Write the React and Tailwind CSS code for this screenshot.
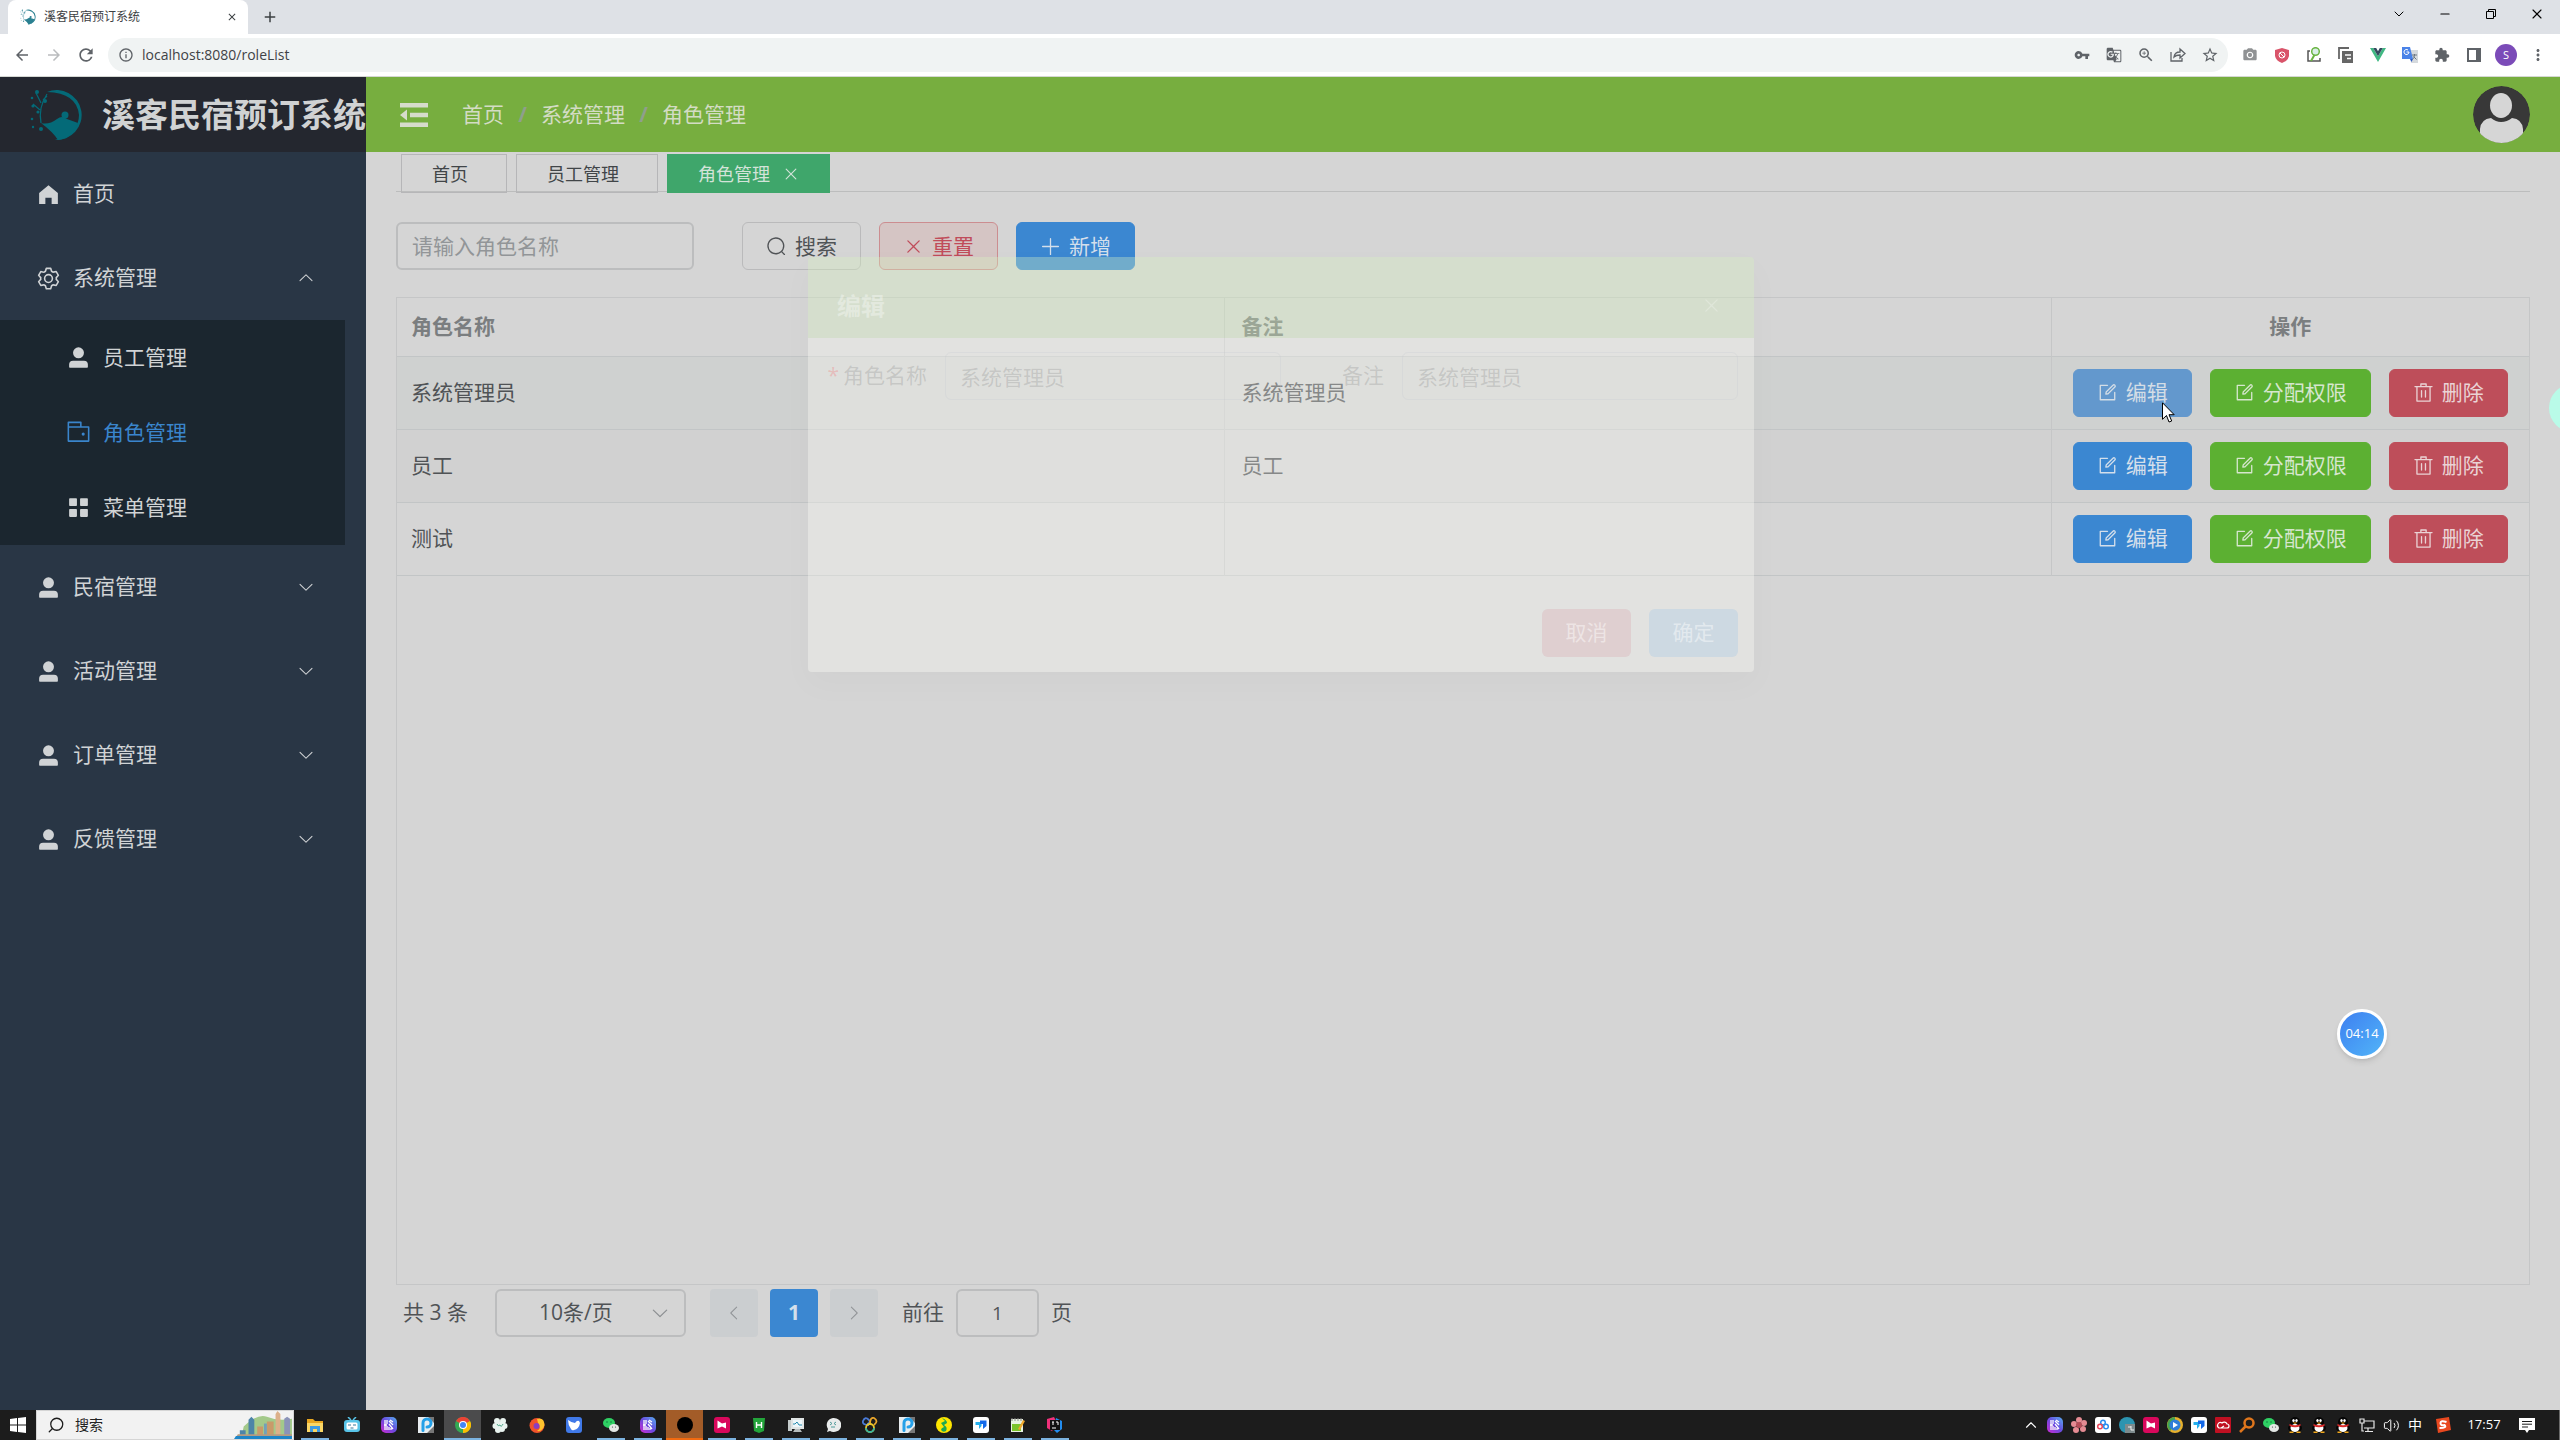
import React from "react";
import {
  MdVpnKey, MdGTranslate, MdZoomIn, MdStarBorder, MdPhotoCamera, MdExtension, MdArrowBack,
  MdArrowForward, MdRefresh, MdInfoOutline, MdMoreVert, MdClose, MdAdd,
} from "react-icons/md";
import { ChevronDown, ChevronUp, X, Minus, Search as LuSearch, Volume2 } from "lucide-react";

const P = {
  edit: "M832 512a32 32 0 1 1 64 0v352a32 32 0 0 1-32 32H160a32 32 0 0 1-32-32V160a32 32 0 0 1 32-32h352a32 32 0 0 1 0 64H192v640h640V512z m-362.048 42.24 52.8-7.552L847.104 222.4a32 32 0 1 0-45.248-45.248L477.44 501.44l-7.552 52.8zm422.4-422.4a96 96 0 0 1 0 135.808l-331.84 331.84a32 32 0 0 1-18.112 9.088L436.8 623.68a32 32 0 0 1-36.224-36.224l15.104-105.6a32 32 0 0 1 9.024-18.112l331.904-331.84a96 96 0 0 1 135.744 0z",
  del: "M160 256H96a32 32 0 0 1 0-64h256V95.936a32 32 0 0 1 32-32h256a32 32 0 0 1 32 32V192h256a32 32 0 1 1 0 64h-64v672a32 32 0 0 1-32 32H192a32 32 0 0 1-32-32V256zm448-64v-64H416v64h192zM224 896h576V256H224v640zm192-128a32 32 0 0 1-32-32V416a32 32 0 0 1 64 0v320a32 32 0 0 1-32 32zm192 0a32 32 0 0 1-32-32V416a32 32 0 0 1 64 0v320a32 32 0 0 1-32 32z",
  search: "m795.904 750.72 124.992 124.928a32 32 0 0 1-45.248 45.248L750.656 795.904a416 416 0 1 1 45.248-45.248zM480 832a352 352 0 1 0 0-704 352 352 0 0 0 0 704z",
  close: "M764.288 214.592 512 466.88 259.712 214.592a31.936 31.936 0 0 0-45.12 45.12L466.752 512 214.528 764.224a31.936 31.936 0 1 0 45.12 45.184L512 557.184l252.288 252.288a31.936 31.936 0 0 0 45.12-45.12L557.12 512.064l252.288-252.352a31.936 31.936 0 1 0-45.12-45.184z",
  plus: "M480 480V128a32 32 0 0 1 64 0v352h352a32 32 0 1 1 0 64H544v352a32 32 0 1 1-64 0V544H128a32 32 0 0 1 0-64h352z",
  down: "M831.872 340.864 512 652.672 192.128 340.864a30.592 30.592 0 0 0-42.752 0 29.12 29.12 0 0 0 0 41.6L489.664 714.24a32 32 0 0 0 44.672 0l340.288-331.712a29.12 29.12 0 0 0 0-41.728 30.592 30.592 0 0 0-42.752 0z",
  user: "M288 320a224 224 0 1 0 448 0 224 224 0 1 0-448 0zm544 608H160a32 32 0 0 1-32-32v-96a160 160 0 0 1 160-160h448a160 160 0 0 1 160 160v96a32 32 0 0 1-32 32z",
  home: "M512 128 128 447.936V896h255.936V640H640v256h255.936V447.936z",
  wallet: "M640 288h-64V128H128v160H64V96a32 32 0 0 1 32-32h512a32 32 0 0 1 32 32v192zM128 320v512h768V320H128zm-32-64h832a32 32 0 0 1 32 32v576a32 32 0 0 1-32 32H96a32 32 0 0 1-32-32V288a32 32 0 0 1 32-32zM704 640a64 64 0 1 1 0-128 64 64 0 0 1 0 128z",
  menu: "M160 448a32 32 0 0 1-32-32V160.064a32 32 0 0 1 32-32h256a32 32 0 0 1 32 32V416a32 32 0 0 1-32 32H160zm448 0a32 32 0 0 1-32-32V160.064a32 32 0 0 1 32-32h255.936a32 32 0 0 1 32 32V416a32 32 0 0 1-32 32H608zM160 896a32 32 0 0 1-32-32V608a32 32 0 0 1 32-32h256a32 32 0 0 1 32 32v256a32 32 0 0 1-32 32H160zm448 0a32 32 0 0 1-32-32V608a32 32 0 0 1 32-32h255.936a32 32 0 0 1 32 32v256a32 32 0 0 1-32 32H608z",
  setting: "M600.704 64a32 32 0 0 1 30.464 22.208l35.2 109.376c14.784 7.232 28.928 15.36 42.432 24.512l112.384-24.192a32 32 0 0 1 34.432 15.36L944.32 364.8a32 32 0 0 1-4.032 37.504l-77.12 85.12a357.12 357.12 0 0 1 0 49.024l77.12 85.248a32 32 0 0 1 4.032 37.504l-88.704 153.6a32 32 0 0 1-34.432 15.296L708.8 803.904c-13.44 9.088-27.648 17.28-42.368 24.512l-35.264 109.376A32 32 0 0 1 600.704 960H423.296a32 32 0 0 1-30.464-22.208L357.696 828.48a351.616 351.616 0 0 1-42.56-24.64l-112.32 24.256a32 32 0 0 1-34.432-15.36L79.68 659.2a32 32 0 0 1 4.032-37.504l77.12-85.248a357.12 357.12 0 0 1 0-48.896l-77.12-85.248A32 32 0 0 1 79.68 364.8l88.704-153.6a32 32 0 0 1 34.432-15.296l112.32 24.256c13.568-9.152 27.776-17.408 42.56-24.64l35.2-109.312A32 32 0 0 1 423.232 64H600.64zm-23.424 64H446.72l-36.352 113.088-24.512 11.968a294.113 294.113 0 0 0-34.816 20.096l-22.656 15.36-116.224-25.088-65.28 113.152 79.68 88.192-1.92 27.136a293.12 293.12 0 0 0 0 40.192l1.92 27.136-79.808 88.192 65.344 113.152 116.224-25.024 22.656 15.296a294.113 294.113 0 0 0 34.816 20.096l24.512 11.968L446.72 896h130.688l36.48-113.152 24.448-11.904a288.282 288.282 0 0 0 34.752-20.096l22.592-15.296 116.288 25.024 65.28-113.152-79.744-88.192 1.92-27.136a293.12 293.12 0 0 0 0-40.256l-1.92-27.136 79.808-88.128-65.344-113.152-116.288 24.96-22.592-15.232a287.616 287.616 0 0 0-34.752-20.096l-24.448-11.904L577.344 128zM512 320a192 192 0 1 1 0 384 192 192 0 0 1 0-384zm0 64a128 128 0 1 0 0 256 128 128 0 0 0 0-256z",
};

function Ico({ d, className }) {
  return (
    <svg viewBox="0 0 1024 1024" fill="currentColor" className={className} aria-hidden="true">
      <path d={d} />
    </svg>
  );
}

function Logo({ className, tone }) {
  return (
    <svg viewBox="0 0 54 54" className={className} fill="none" aria-hidden="true">
      <path d="M18 4 A25 25 0 1 1 26 52 Q50 45 50 27 Q48 5 18 4Z" fill={tone} />
      <path d="M12 35 Q20 37 28 31 Q33 27 38 31 L49 35 Q44 50 29 52 Q24 44 12 35Z" fill={tone} />
      <circle cx="36" cy="27" r="3.5" fill={tone} />
      <path d="M12 35 Q9 20 18 6 M11 22 L4 16 M12 15 L7 5 M14 12 L18 8" stroke={tone} strokeWidth="1.2" />
      <g fill={tone}>
        <circle cx="8" cy="4" r="2" /><circle cx="3" cy="10" r="1.3" /><circle cx="4" cy="18" r="1.6" />
        <circle cx="16" cy="13" r="2" /><circle cx="9" cy="24" r="1.6" /><circle cx="3" cy="31" r="1.3" />
        <circle cx="12" cy="41" r="2" /><circle cx="4" cy="39" r="1.2" />
      </g>
    </svg>
  );
}

/* ---------- browser window ---------- */

function VueMark() {
  return (
    <svg viewBox="0 0 16 14" className="h-[14px] w-4">
      <path d="M0 0h3.2L8 8.3 12.8 0H16L8 14z" fill="#41b883" />
      <path d="M3.2 0h3L8 3.2 9.8 0h3L8 8.3z" fill="#34495e" />
    </svg>
  );
}

function ToolBtn({ label, children }) {
  return (
    <button aria-label={label} className="flex h-8 w-8 items-center justify-center text-[#5f6368]">{children}</button>
  );
}

function BrowserChrome() {
  return (
    <div className="shrink-0">
      <div className="flex h-[34px] items-start bg-[#dee1e6] pl-2">
        <div className="flex h-[34px] w-60 items-center rounded-t-lg bg-white pl-3 pr-2">
          <Logo className="h-4 w-4 shrink-0" tone="#2a8091" />
          <span className="ml-2 flex-1 text-xs text-[#3c4043]">溪客民宿预订系统</span>
          <button aria-label="关闭标签页" className="flex h-4 w-4 items-center justify-center text-[#3c4043]"><MdClose className="h-3 w-3" /></button>
        </div>
        <button aria-label="新标签页" className="ml-3 mt-[7px] flex h-5 w-5 items-center justify-center text-[#3c4043]"><MdAdd className="h-[18px] w-[18px]" /></button>
        <div className="ml-auto flex h-[28px] text-black">
          <button aria-label="搜索标签页" className="flex w-[46px] items-center justify-center"><ChevronDown className="h-4 w-4" strokeWidth={1.5} /></button>
          <button aria-label="最小化" className="flex w-[46px] items-center justify-center"><Minus className="h-3.5 w-3.5" strokeWidth={2} /></button>
          <button aria-label="还原" className="flex w-[46px] items-center justify-center">
            <svg viewBox="0 0 10 10" className="h-2.5 w-2.5" fill="none" stroke="currentColor"><path d="M.5 2.5h7v7h-7zM2.5 2.5v-2h7v7h-2" /></svg>
          </button>
          <button aria-label="关闭" className="flex w-[46px] items-center justify-center"><X className="h-4 w-4" strokeWidth={1.7} /></button>
        </div>
      </div>
      <div className="flex h-[43px] items-center border-b border-[#d5d8d3] bg-white pl-[6px] pr-[6px]">
        <ToolBtn label="后退"><MdArrowBack className="h-[18px] w-[18px]" /></ToolBtn>
        <ToolBtn label="前进"><MdArrowForward className="h-[18px] w-[18px] text-[#babcbe]" /></ToolBtn>
        <ToolBtn label="刷新"><MdRefresh className="h-5 w-5" /></ToolBtn>
        <div className="ml-[6px] flex h-[34px] flex-1 items-center rounded-full bg-[#f0f3f3] pl-2.5 pr-0.5">
          <MdInfoOutline className="h-4 w-4 text-[#5f6368]" />
          <input aria-label="地址栏" defaultValue="localhost:8080/roleList" className="ml-2 flex-1 bg-transparent text-sm text-[#3f4246] outline-none" />
          <ToolBtn label="密码"><MdVpnKey className="h-4 w-4" /></ToolBtn>
          <ToolBtn label="翻译"><MdGTranslate className="h-4 w-4" /></ToolBtn>
          <ToolBtn label="缩放"><MdZoomIn className="h-[18px] w-[18px]" /></ToolBtn>
          <ToolBtn label="分享">
            <svg viewBox="0 0 16 16" className="h-4 w-4" fill="none" stroke="currentColor" strokeWidth="1.3"><path d="M1 5v9h11v-3M4 10c.5-4 3-5 6-5V2l5 4.500-5 4.500V8c-3 0-4.500.500-6 2z" /></svg>
          </ToolBtn>
          <ToolBtn label="收藏"><MdStarBorder className="h-[18px] w-[18px]" /></ToolBtn>
        </div>
        <div className="ml-[6px] flex">
          <ToolBtn label="截图"><MdPhotoCamera className="h-4 w-4 text-[#909294]" /></ToolBtn>
          <ToolBtn label="广告拦截">
            <svg viewBox="0 0 14 15" className="h-[15px] w-3.5"><path d="M7 0l7 2v6q-1 5-7 7Q1 13 0 8V2z" fill="#d9546a" /><circle cx="7" cy="7" r="3" fill="none" stroke="#fff" /><path d="M5 5l4 4" stroke="#fff" /></svg>
          </ToolBtn>
          <ToolBtn label="查询">
            <svg viewBox="0 0 16 16" className="h-4 w-4" fill="none"><path d="M4 4H2v10h12v-3" stroke="#555" strokeWidth="1.500" /><path d="M5 14l4-7" stroke="#6bb544" strokeWidth="2" /><circle cx="9.500" cy="4.500" r="3.800" fill="#d9efe8" stroke="#6bb544" strokeWidth="1.500" /></svg>
          </ToolBtn>
          <ToolBtn label="复制">
            <svg viewBox="0 0 16 16" className="h-4 w-4"><path d="M1 12V1h10" fill="none" stroke="#666" strokeWidth="1.800" /><path d="M4 4h11v12H4z" fill="#666" /><path d="M7 8h6M9 11.500h4" stroke="#fff" strokeWidth="1.300" /></svg>
          </ToolBtn>
          <ToolBtn label="Vue"><VueMark /></ToolBtn>
          <ToolBtn label="谷歌翻译">
            <svg viewBox="0 0 16 16" className="h-4 w-4"><path d="M7 3h9v13H9z" fill="#d5d9dd" /><path d="M0 0h8l3 12H0z" fill="#4a83e8" /><path d="M8 12h3l-1.500 3z" fill="#2b59c3" /><path d="M7 5H4.500M7 5a2.500 2.500 0 1 1-1-2" stroke="#fff" fill="none" /><path d="M10 8h5M12.500 7v1c0 2-1 3.500-2 4.500M11.500 9.500l3 3" stroke="#6d7780" fill="none" /></svg>
          </ToolBtn>
          <ToolBtn label="扩展程序"><MdExtension className="h-4 w-4" /></ToolBtn>
          <ToolBtn label="侧边栏">
            <svg viewBox="0 0 14 14" className="h-3.5 w-3.5"><path d="M1 1h12v12H1z" fill="none" stroke="currentColor" strokeWidth="2" /><path d="M9 1h4v12H9z" fill="currentColor" /></svg>
          </ToolBtn>
          <ToolBtn label="用户"><span className="flex h-[22px] w-[22px] items-center justify-center rounded-full bg-[#7b4bb8] text-[11px] text-white">S</span></ToolBtn>
          <ToolBtn label="更多"><MdMoreVert className="h-[18px] w-[18px]" /></ToolBtn>
        </div>
      </div>
    </div>
  );
}

/* ---------- sidebar ---------- */

function SideItem({ icon, label, arrow }) {
  return (
    <a href="#" className="flex h-[84px] items-center pl-9 pr-[51px] text-[21px] text-[#d0d3d5]">
      <Ico d={icon} className="h-[25px] w-[25px]" />
      <span className="ml-3 flex-1">{label}</span>
      {arrow && <Ico d={P.down} className={arrow === "up" ? "h-[18px] w-[18px] rotate-180" : "h-[18px] w-[18px]"} />}
    </a>
  );
}

function SubItem({ icon, label, active }) {
  return (
    <a href="#" className={`flex h-[75px] items-center pl-[66px] text-[21px] ${active ? "text-[#3a85cc]" : "text-[#d0d3d5]"}`}>
      <Ico d={icon} className="h-[25px] w-[25px]" />
      <span className="ml-3">{label}</span>
    </a>
  );
}

function Sidebar() {
  return (
    <aside className="w-[366px] shrink-0 bg-[#293645]">
      <div className="flex h-[75px] items-center bg-[#24272f] pl-[29px]">
        <Logo className="h-[54px] w-[54px] shrink-0" tone="#046a78" />
        <h1 className="ml-[19px] whitespace-nowrap text-[33px] font-bold leading-10 text-[#d0d2d3]">溪客民宿预订系统</h1>
      </div>
      <nav>
        <SideItem icon={P.home} label="首页" />
        <SideItem icon={P.setting} label="系统管理" arrow="up" />
        <div className="mr-[21px] bg-[#1b262f]">
          <SubItem icon={P.user} label="员工管理" />
          <SubItem icon={P.wallet} label="角色管理" active />
          <SubItem icon={P.menu} label="菜单管理" />
        </div>
        <SideItem icon={P.user} label="民宿管理" arrow="down" />
        <SideItem icon={P.user} label="活动管理" arrow="down" />
        <SideItem icon={P.user} label="订单管理" arrow="down" />
        <SideItem icon={P.user} label="反馈管理" arrow="down" />
      </nav>
    </aside>
  );
}

/* ---------- content ---------- */

function Header() {
  return (
    <header className="flex h-[75px] items-center bg-[#77ae3f] pl-[34px] pr-[30px]">
      <button aria-label="收起菜单">
        <svg viewBox="0 0 28 24" className="h-6 w-7" fill="#d6dccb"><path d="M0 0h28v4.500H0zM10 9.700h18v4.500H10zM0 19.500h28V24H0zM7 6.500v11L0 12z" /></svg>
      </button>
      <nav className="ml-[34px] flex items-center text-[21px] text-[#d3dcc4]">
        <a href="#">首页</a>
        <span className="w-[37px] text-center font-bold text-[#8f9f8c]">/</span>
        <a href="#">系统管理</a>
        <span className="w-[37px] text-center font-bold text-[#8f9f8c]">/</span>
        <span>角色管理</span>
      </nav>
      <svg viewBox="0 0 57 57" className="ml-auto h-[57px] w-[57px]">
        <defs><clipPath id="av"><circle cx="28.500" cy="28.500" r="28.500" /></clipPath></defs>
        <g clipPath="url(#av)">
          <circle cx="28.500" cy="28.500" r="28.500" fill="#383838" />
          <ellipse cx="28" cy="19.500" rx="11" ry="12.500" fill="#d6d6d6" />
          <path d="M7 57V43Q8 33 18 32Q23 36 28 36Q34 36 39 32Q49 33 50 43V57z" fill="#d6d6d6" />
        </g>
      </svg>
    </header>
  );
}

function PageTab({ label, active }) {
  return (
    <div className={`flex h-[39px] items-center border pl-[30px] text-lg ${active ? "border-[#3fa66b] bg-[#3fa66b] text-[#d3e3d9]" : "border-[#b6b6b8] text-[#414548]"}`}>
      <a href="#">{label}</a>
      {active ? (
        <button aria-label="关闭角色管理" className="ml-3 mr-[29px]"><Ico d={P.close} className="h-[18px] w-[18px]" /></button>
      ) : <span className="w-[38px]" />}
    </div>
  );
}

const tones = {
  plain: "border-[#bababb] text-[#505356]",
  resetTone: "border-[#cc8d90] bg-[#d5c5c4] text-[#c04c5a]",
  blue: "border-[#3b87d1] bg-[#3b87d1] text-[#d4dfeb]",
  hover: "border-[#6398cd] bg-[#6398cd] text-[#d4dde6]",
  green: "border-[#5cb032] bg-[#5cb032] text-[#d6e6ce]",
  red: "border-[#be4e5a] bg-[#be4e5a] text-[#ead3d5]",
};

function Btn({ tone, icon, children }) {
  return (
    <button className={`flex h-12 items-center whitespace-nowrap rounded-md border px-[23px] text-[21px] leading-none ${tones[tone]}`}>
      <Ico d={icon} className="mr-2 h-[21px] w-[21px]" />
      {children}
    </button>
  );
}

const rows = [
  { name: "系统管理员", note: "系统管理员", bg: "bg-[#cfd1d0]", hover: true },
  { name: "员工", note: "员工", bg: "bg-[#d1d1d1]" },
  { name: "测试", note: "", bg: "" },
];

function RoleTable() {
  return (
    <div className="min-h-0 flex-1 border border-[#c5c6c7]">
      <table className="w-full table-fixed border-collapse text-left text-[21px] text-[#505356]">
        <colgroup><col /><col /><col className="w-[478px]" /></colgroup>
        <thead>
          <tr className="h-[58px] border-b border-[#c2c5c6] text-[#7b7e80]">
            <th className="border-r border-[#c5c6c7] pl-3.5">角色名称</th>
            <th className="border-r border-[#c5c6c7] pl-[17px]">备注</th>
            <th className="text-center">操作</th>
          </tr>
        </thead>
        <tbody>
          {rows.map((r) => (
            <tr key={r.name} className={`h-[73px] border-b border-[#c2c5c6] ${r.bg}`}>
              <td className="border-r border-[#c5c6c7] pl-3.5">{r.name}</td>
              <td className="border-r border-[#c5c6c7] pl-[17px]">{r.note}</td>
              <td>
                <div className="flex justify-center gap-[18px]">
                  <Btn tone={r.hover ? "hover" : "blue"} icon={P.edit}>编辑</Btn>
                  <Btn tone="green" icon={P.edit}>分配权限</Btn>
                  <Btn tone="red" icon={P.del}>删除</Btn>
                </div>
              </td>
            </tr>
          ))}
        </tbody>
      </table>
    </div>
  );
}

function Pagination() {
  return (
    <div className="flex h-12 items-center pl-[7px] text-[21px] text-[#505356]">
      <span>共 3 条</span>
      <div className="relative ml-[27px]">
        <select aria-label="每页条数" className="h-12 w-[191px] appearance-none rounded-md border-2 border-[#bcbdbe] bg-transparent pl-[42px] outline-none">
          <option>10条/页</option>
        </select>
        <Ico d={P.down} className="pointer-events-none absolute right-4 top-3.5 h-5 w-5 text-[#8c8f92]" />
      </div>
      <button aria-label="上一页" className="ml-6 flex h-12 w-12 items-center justify-center rounded-sm bg-[#cbced0] text-[#919497]"><Ico d={P.down} className="h-[18px] w-[18px] rotate-90" /></button>
      <button className="ml-3 h-12 w-12 rounded-sm bg-[#3b87d1] font-bold text-[#d4dfeb]">1</button>
      <button aria-label="下一页" className="ml-3 flex h-12 w-12 items-center justify-center rounded-sm bg-[#cbced0] text-[#919497]"><Ico d={P.down} className="h-[18px] w-[18px] -rotate-90" /></button>
      <label className="ml-6 flex items-center">
        前往
        <input defaultValue="1" className="mx-3 h-12 w-[83px] rounded-md border-2 border-[#bcbdbe] bg-transparent text-center text-[19px] outline-none" />
        页
      </label>
    </div>
  );
}

function DialogField({ label, required }) {
  return (
    <label className="flex flex-1 items-center justify-end text-[21px] text-[#606266]/20">
      {required && <span className="mr-1 text-[#f56c6c]/30">*</span>}
      {label}
      <input defaultValue="系统管理员" className="ml-[18px] h-12 w-[336px] rounded-md border border-[#c0c4cc]/20 bg-transparent px-3.5 text-[#606266]/20 outline-none" />
    </label>
  );
}

function EditDialog() {
  return (
    <div className="pointer-events-none absolute inset-0 flex items-start justify-center pl-0.5 pt-[257px]">
      <section role="dialog" aria-label="编辑" className="w-[946px] overflow-hidden rounded-sm shadow-[0_12px_32px_4px_rgba(0,0,0,0.02)]">
        <div className="flex h-[81px] items-center justify-between bg-[#d8f0c0]/35 pl-[29px] pr-8 pt-4">
          <h2 className="text-2xl font-bold text-white/35">编辑</h2>
          <button aria-label="关闭" className="text-white/25"><Ico d={P.close} className="h-[21px] w-[21px]" /></button>
        </div>
        <div className="bg-[#fffff8]/31">
          <div className="flex h-[271px] items-start px-4 pt-3.5">
            <DialogField label="角色名称" required />
            <DialogField label="备注" />
          </div>
          <div className="flex h-[63px] justify-end gap-[18px] pr-4">
            <button className="h-12 w-[89px] rounded-md bg-[#dcbcbf]/50 text-[21px] text-white/45">取消</button>
            <button className="h-12 w-[89px] rounded-md bg-[#b7cfe3]/50 text-[21px] text-white/45">确定</button>
          </div>
        </div>
      </section>
    </div>
  );
}

/* ---------- taskbar ---------- */

const glyphs = {
  explorer: <><path d="M0 2h6l2 2h8v11H0z" fill="#e8a620" /><path d="M0 6h16v9H0z" fill="#fbd765" /><path d="M3 15V9h10v6h-3v-3H6v3z" fill="#3f9be0" /></>,
  bili: <><path d="M4 0l3 3M12 0L9 3" stroke="#58c4e8" strokeWidth="1.500" /><rect y="3" width="16" height="12" rx="3" fill="#58c4e8" /><rect x="2.500" y="5.500" width="11" height="7" rx="1.500" fill="#fff" /><path d="M4 8h3M9 8h3M6.500 11h3" stroke="#36799a" /></>,
  purple: <><defs><linearGradient id="pg" x1="0" y1="1" x2="1" y2="0"><stop stopColor="#d02ad0" /><stop offset=".5" stopColor="#6a4ae0" /><stop offset="1" stopColor="#55b0f0" /></linearGradient></defs><rect width="16" height="16" rx="5" fill="url(#pg)" /><path d="M4 3v10M6 3v4M6 9v4M8 4l4 4M8 7l4 5M9 3l3 2M8 10v3M3 8h3M10 11v2" stroke="#fff" strokeWidth="1.300" /></>,
  pblue: <><path d="M0 0h16v16H0z" fill="#e8edf0" /><path d="M10 0h6v6zM9 16h7V9z" fill="#777" /><path d="M5 13.500V6a4 4 0 1 1 4 4" fill="none" stroke="#25a0e8" strokeWidth="3" strokeLinecap="round" /></>,
  chrome: <><circle cx="8" cy="8" r="8" fill="#34a853" /><path d="M8 8L1 4a8 8 0 0 1 14 0z" fill="#ea4335" /><path d="M8 8l7-4A8 8 0 0 1 8 16z" fill="#fbbc04" /><circle cx="8" cy="8" r="4" fill="#fff" /><circle cx="8" cy="8" r="3" fill="#4285f4" /></>,
  flower: <><g fill="#e9f3ef"><circle cx="5" cy="4" r="3" /><circle cx="11" cy="4" r="3" /><circle cx="3.500" cy="9" r="3" /><circle cx="12.500" cy="9" r="3" /><circle cx="6" cy="13" r="3" /><circle cx="10" cy="12" r="3" /><circle cx="8" cy="8" r="3.500" /></g><path d="M5 7q1 3 3 1q1 3 3-1" fill="none" stroke="#4ba687" /></>,
  firefox: <><circle cx="8" cy="8.500" r="7.500" fill="#f0522b" /><path d="M8 2q7-2 7.500 6q-2 7-7.500 6q5-3 1-8z" fill="#ffc42e" /><circle cx="7.500" cy="9" r="3" fill="#8a3ec0" /></>,
  bird: <><rect width="16" height="16" rx="3" fill="#4079e8" /><path d="M2 3q4 3 7 3q2-3 4-2l1 2q-1 6-6 7q-2 1-3-1q-3-4-3-9z" fill="#fff" /></>,
  wechat: <><ellipse cx="6" cy="6" rx="6" ry="5" fill="#2fd063" /><circle cx="4" cy="5" r=".8" fill="#174" /><circle cx="8" cy="5" r=".8" fill="#174" /><ellipse cx="11" cy="11" rx="5" ry="4" fill="#e4e8e6" /><circle cx="9.500" cy="10" r=".6" fill="#444" /><circle cx="12.500" cy="10" r=".6" fill="#444" /></>,
  dot: <circle cx="8" cy="8" r="8" fill="#000" />,
  pink: <><rect width="16" height="16" rx="3" fill="#d9085c" /><path d="M3.500 3.500l4.500 3 4-1v6l-4-2-4.500 2z" fill="#fff" /></>,
  hgreen: <><path d="M2 1h12l-1 13-5 2-5-2z" fill="#23a53b" /><path d="M5.500 5v6M10.500 5v6M5.500 8h5" stroke="#fff" strokeWidth="1.400" /></>,
  monitor: <><path d="M0 3h4v11H0z" fill="#c5cccc" /><path d="M3 1h13v11H3z" fill="#dfe4e4" /><path d="M5 3h9v7H5z" fill="#eef7fa" /><path d="M5 7h2l2-2 2 3h3" fill="none" stroke="#2489ad" /><path d="M7 12h5l2 3H5z" fill="#b5bbbb" /></>,
  bubble: <><path d="M8 1a7.500 7 0 1 1-3 13l-3 1 1-3A7 7 0 0 1 8 1z" fill="#e9ecec" /><path d="M5 5l2 1.500L5 8M11 5L9 6.500 11 8M6 10h4" stroke="#4f9a9a" fill="none" /></>,
  navicat: <g fill="none" strokeWidth="1.800"><path d="M7 8Q0 8 1 4Q3-1 7 3Q9 6 5 7" stroke="#4a7bd8" /><path d="M8 7Q8 0 12 1Q17 4 12 8" stroke="#e9a62b" /><circle cx="8" cy="11" r="4" stroke="#e9c62b" /><path d="M4 11a4 4 0 0 0 8 0" stroke="#38b59f" /></g>,
  music: <><circle cx="8" cy="8" r="8" fill="#ffe600" /><path d="M6 1q5 2 5 5l-3 2q4 2 2 6q-3 2-5-1q0-2 3-3L5 6l4-2z" fill="#1ea851" /></>,
  todesk: <><rect width="16" height="16" rx="3" fill="#fff" /><path d="M2.500 5h6v4L6 12V8H2.500z" fill="#25b0ee" /><path d="M7 3.500h6.500V9L10 12V7H7z" fill="#1369ea" /></>,
  notepad: <><path d="M1 2h12v13H1z" fill="#e9f2e0" /><path d="M2 7h9v7H2z" fill="#7cc42a" /><path d="M2 1v3M5 1v3M8 1v3M11 1v3" stroke="#888" /><path d="M8 12l5-9 2 1-5 9z" fill="#f0a82c" /></>,
  idea: <><path d="M0 2l7-2 3 6-5 8-5-3z" fill="#f0307a" /><path d="M9 1l6 3v8l-5 4-3-3z" fill="#238df0" /><path d="M3 3h10v10H3z" fill="#111" /><path d="M5 5h2M6 5v3M9 5h2v3M5 11h4" stroke="#fff" fill="none" /></>,
  blossom: <><g fill="#e58b93"><circle cx="8" cy="3" r="3" /><circle cx="13" cy="6" r="3" /><circle cx="12" cy="12" r="3" /><circle cx="5" cy="13" r="3" /><circle cx="3" cy="7" r="3" /></g><circle cx="8" cy="8" r="3" fill="#b34d58" /></>,
  netdisk: <><rect width="16" height="16" rx="3" fill="#fff" /><g fill="none" strokeWidth="1.500"><circle cx="8" cy="5.500" r="2.300" stroke="#2a8df0" /><circle cx="5" cy="9.500" r="2.300" stroke="#e9475a" /><circle cx="11" cy="9.500" r="2.300" stroke="#2a8df0" /></g></>,
  globe: <><circle cx="8" cy="8" r="8" fill="#2c94b0" /><path d="M6 7h10v9H6z" fill="#7d8a8c" /><path d="M9 10h3M12 13h3M12 9v4" stroke="#eee" fill="none" /></>,
  player: <><circle cx="8" cy="8" r="8" fill="#e7b12c" /><path d="M8 0a8 8 0 0 0-5 14l5-6z" fill="#43a34e" /><circle cx="8" cy="8" r="5.500" fill="#2f7ed8" /><path d="M6 5l5 3-5 3z" fill="#fff" /></>,
  cloudred: <><rect width="16" height="16" rx="1" fill="#c01022" /><path d="M4 11h8a2 2 0 0 0 0-4 3 3 0 0 0-5-1 2.500 2.500 0 0 0-3 5zM6 11l3-2" fill="none" stroke="#fff" strokeWidth="1.200" /></>,
  magnify: <><circle cx="10" cy="6" r="4.500" fill="none" stroke="#e0761c" strokeWidth="2.500" /><path d="M1 15l6-6" stroke="#e0761c" strokeWidth="2.500" /></>,
  qq: <><ellipse cx="8" cy="5" rx="5" ry="5" fill="#050505" /><ellipse cx="8" cy="11" rx="7" ry="4.500" fill="#050505" /><ellipse cx="8" cy="11" rx="4.500" ry="4" fill="#fff" /><ellipse cx="6.500" cy="3.500" rx="1.200" ry="1.600" fill="#fff" /><ellipse cx="9.500" cy="3.500" rx="1.200" ry="1.600" fill="#fff" /><path d="M5.500 5.500h5L8 7z" fill="#f2a81d" /><path d="M2.500 7q5.500 2.500 11 0v2q-5.500 2.500-11 0z" fill="#d92a2a" /><path d="M2.500 15.200h4M9.500 15.200h4" stroke="#f2a81d" strokeWidth="1.500" /></>,
  net: <g fill="none" stroke="#e8e8e8" strokeWidth="1.200"><path d="M5 4h10v7H5M9 11v3M6 14.500h8M1 2h4v4H1zM3 6v8h2" /></g>,
  sogou: <><path d="M1 2l13-2 2 13-13 3z" fill="#e8481f" /><path d="M11.500 5q-6-2-6 1t4 2q3 3-5 3" fill="none" stroke="#fff" strokeWidth="2" /></>,
  notice: <><path d="M0 1h16v12H10l-2 3-2-3H0z" fill="#fff" /><path d="M3 4.500h10M3 7.200h10M3 10h6" stroke="#1c1c1c" /></>,
};

function Glyph({ name }) {
  return <svg viewBox="0 0 16 16" className="h-4 w-4" aria-hidden="true">{glyphs[name]}</svg>;
}

const apps = [
  ["explorer", 1], ["bili", 0], ["purple", 0], ["pblue", 0], ["chrome", 2], ["flower", 0], ["firefox", 0], ["bird", 0],
  ["wechat", 1], ["purple", 1], ["dot", 3], ["pink", 1], ["hgreen", 1], ["monitor", 1], ["bubble", 1], ["navicat", 1],
  ["pblue", 1], ["music", 1], ["todesk", 1], ["notepad", 1], ["idea", 1],
];
const tray = ["purple", "blossom", "netdisk", "globe", "pink", "player", "todesk", "cloudred", "magnify", "wechat", "qq", "qq", "qq", "net"];
const appBg = ["", "", "bg-[#4b4b4c]", "bg-[#a35c28]"];
const appBar = ["bg-transparent", "bg-[#7cb3e0]", "bg-[#7cb3e0]", "bg-[#f06a10]"];

function Taskbar() {
  return (
    <footer className="flex h-[30px] shrink-0 bg-[#1c1c1c]">
      <button aria-label="开始" className="flex w-9 items-center justify-center">
        <svg viewBox="0 0 16 16" className="h-4 w-4" fill="#fff"><path d="M0 2l7-1v6.500H0zM8 .900L16 0v7.500H8zM0 8.500h7V15l-7-1zM8 8.500h8V16l-8-1z" /></svg>
      </button>
      <label className="flex w-[258px] items-center border border-[#d5d5d5] bg-[#f2f2f2] pl-2.5">
        <LuSearch className="h-[18px] w-[18px] -scale-x-100 text-[#1c1c1c]" strokeWidth={1.7} />
        <input aria-label="搜索" placeholder="搜索" className="ml-2.5 w-[152px] bg-transparent text-sm text-[#222] outline-none placeholder:text-[#222]" />
        <svg viewBox="0 0 60 29" className="ml-auto h-[28px] w-[60px]">
          <path d="M10 16q15-14 24-10q12 5 26 2v18H8z" fill="#a3c98a" />
          <path d="M15 9l3-3 3 3v18h-6zM6 20h6v7H6z" fill="#4d84a8" />
          <path d="M24 16h6v11h-6zM34 11h7v16h-7z" fill="#c99a6a" /><path d="M43 3l2-3 3 3v24h-5z" fill="#dcb08a" />
          <path d="M52 8l3-2 3 2v19h-6z" fill="#8b93b8" /><path d="M31 13h3v14h-3z" fill="#74a0b8" />
          <path d="M4 24h56v3H2z" fill="#b59a80" /><path d="M2 26h58v3H0z" fill="#1e86c8" />
        </svg>
      </label>
      <div className="ml-0.5 flex">
        {apps.map(([n, s], i) => (
          <button key={i} aria-label={n} className={`flex w-[37px] flex-col items-center justify-end ${appBg[s]}`}>
            <Glyph name={n} />
            <span className={`mt-[5px] h-0.5 ${s > 1 ? "w-full" : "w-7"} ${appBar[s]}`} />
          </button>
        ))}
      </div>
      <div className="ml-auto flex items-center text-white">
        <button aria-label="显示隐藏的图标" className="flex w-6 justify-center"><ChevronUp className="h-[18px] w-[18px]" strokeWidth={1.5} /></button>
        {tray.map((n, i) => <span key={i} className="flex w-6 justify-center"><Glyph name={n} /></span>)}
        <span className="flex w-6 justify-center"><Volume2 className="h-[17px] w-[17px]" strokeWidth={1.4} /></span>
        <span className="w-6 text-center text-sm">中</span>
        <span className="flex w-8 justify-center"><Glyph name="sogou" /></span>
        <time className="w-[50px] text-center text-[13px]">17:57</time>
        <button aria-label="通知" className="ml-1.5 mr-5 flex w-6 justify-center"><Glyph name="notice" /></button>
        <span className="h-full w-px bg-[#6a6a6a]" />
      </div>
    </footer>
  );
}

export default function App() {
  return (
    <div className="relative flex min-h-screen w-full flex-col overflow-hidden bg-[#d5d5d5] font-['Open_Sans','Noto_Sans_CJK_SC',sans-serif] leading-normal">
      <BrowserChrome />
      <div className="flex flex-1">
        <Sidebar />
        <div className="flex min-w-0 flex-1 flex-col">
          <Header />
          <main className="flex flex-1 flex-col pb-[73px] pl-[30px] pr-[30px] pt-0.5">
            <div className="h-[38px] border-b border-[#bcbdbd] pl-[5px]">
              <div className="flex gap-[9px]">
                <PageTab label="首页" />
                <PageTab label="员工管理" />
                <PageTab label="角色管理" active />
              </div>
            </div>
            <form className="mt-[30px] flex" onSubmit={(e) => e.preventDefault()}>
              <input aria-label="角色名称" placeholder="请输入角色名称" className="mr-12 h-12 w-[298px] rounded-md border-2 border-[#bcbdbe] bg-transparent px-3.5 text-[21px] outline-none placeholder:text-[#929598]" />
              <div className="flex gap-[18px]">
                <Btn tone="plain" icon={P.search}>搜索</Btn>
                <Btn tone="resetTone" icon={P.close}>重置</Btn>
                <Btn tone="blue" icon={P.plus}>新增</Btn>
              </div>
            </form>
            <div className="mb-1 mt-[27px] flex flex-1 flex-col"><RoleTable /></div>
            <Pagination />
          </main>
        </div>
      </div>
      <Taskbar />
      <EditDialog />
      <div className="absolute right-[173px] top-[1009px] flex h-[50px] w-[50px] items-center justify-center rounded-full border-[3px] border-white bg-linear-to-br from-[#3f7ff0] to-[#52b4f8] text-[13px] text-white shadow-md">04:14</div>
      <div className="absolute -right-[37px] top-[384px] h-12 w-12 rounded-full bg-[#b9fbe8]" />
      <svg viewBox="0 0 13 21" className="absolute right-[385px] top-[402px] h-[21px] w-[13px]" aria-hidden="true">
        <path d="M.500.800v16.500l4-3.800 2.500 6.500 2.700-1-2.700-6.300h5.200z" fill="#fff" stroke="#000" />
      </svg>
    </div>
  );
}
